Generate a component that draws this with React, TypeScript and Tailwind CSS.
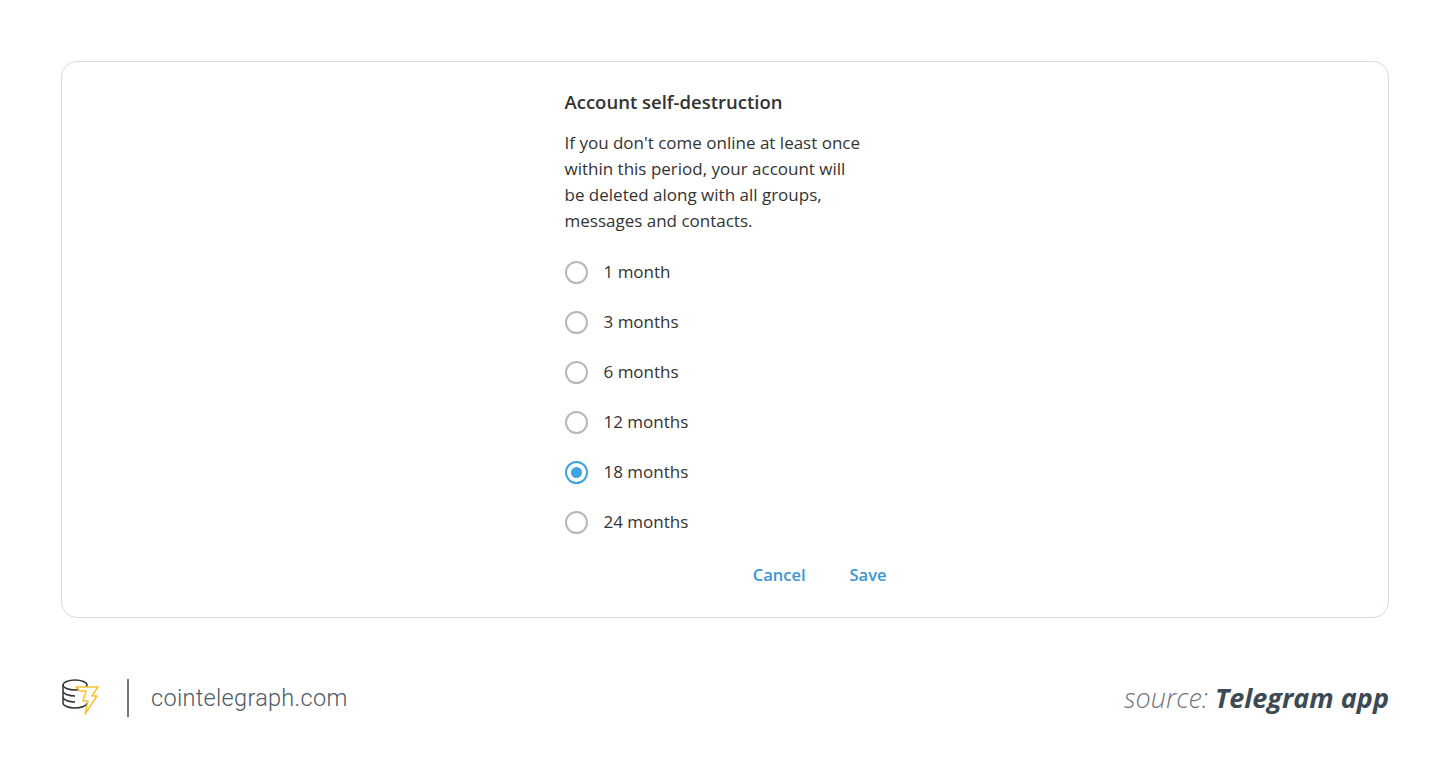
import React from "react";

const options = ["1 month", "3 months", "6 months", "12 months", "18 months", "24 months"];

export default function App() {
  return (
    <div className="w-[1450px] h-[780px] bg-white flex flex-col px-[61px] pt-[61px]" style={{ fontFamily: '"Open Sans", sans-serif' }}>
      <div className="h-[557px] border border-[#d3dce2] rounded-[16px] flex justify-center">
        <div className="w-[324px] ml-[3px] pt-[28px] flex flex-col">
          <div className="text-[18.5px] font-semibold text-[#333] leading-[24px]">Account self-destruction</div>
          <div className="mt-[16px] text-[17px] leading-[26px] text-[#333] w-[305px]">
            If you don't come online at least once within this period, your account will be deleted along with all groups, messages and contacts.
          </div>
          <div className="mt-[13px] flex flex-col">
            {options.map((o) => {
              const sel = o === "18 months";
              return (
                <div key={o} className="h-[50px] flex items-center gap-[16px]">
                  <div className={`w-[23px] h-[23px] rounded-full border-2 flex items-center justify-center ${sel ? "border-[#3fa3e0]" : "border-[#b8b8b8]"}`}>
                    {sel && <div className="w-[11px] h-[11px] rounded-full bg-[#3fa3e0]" />}
                  </div>
                  <span className="text-[17px] text-[#333]">{o}</span>
                </div>
              );
            })}
          </div>
          <div className="mt-[16px] flex justify-end gap-[44px] pr-[2px] text-[16.5px] font-semibold text-[#3a96d2]">
            <span>Cancel</span>
            <span>Save</span>
          </div>
        </div>
      </div>
      <div className="mt-[60px] flex items-center justify-between">
        <div className="flex items-center">
          <svg width="42" height="40" viewBox="0 0 42 40" fill="none" strokeWidth="1.5">
            <ellipse cx="14" cy="7" rx="12" ry="5" stroke="#333" fill="white" />
            <path d="M2 7v6c0 2.8 5.4 5 12 5M2 13v6c0 2.8 5.4 5 12 5M2 19v6c0 2.8 5.4 5 12 5s12-2.2 12-5" stroke="#333" />
            <path d="M15 9h22l-6 9h5L24 36l3-13h-5l3-10h-6z" stroke="#f5c22e" fill="white" strokeLinejoin="round" />
          </svg>
          <div className="w-[2px] h-[38px] bg-[#777] ml-[24px] mr-[22px]" />
          <span className="text-[23.5px] text-[#4c5a66] tracking-[0.3px]" style={{ fontFamily: "Roboto, sans-serif", fontWeight: 300 }}>cointelegraph.com</span>
        </div>
        <div className="text-[27px] italic text-[#3c4a55]" style={{ fontFamily: '"Open Sans", sans-serif' }}>
          <span className="font-light text-[#6b7680]">source: </span>
          <span className="font-bold">Telegram app</span>
        </div>
      </div>
    </div>
  );
}
